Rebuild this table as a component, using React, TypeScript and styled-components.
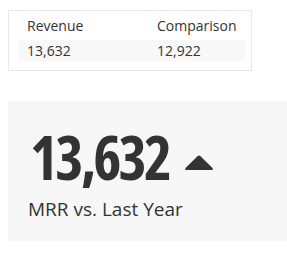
import React from "react";
import styled, { createGlobalStyle } from "styled-components";

const Global = createGlobalStyle`
  html, body { margin: 0; padding: 0; background: #ffffff; }
  body { padding: 8px 0 0 8px; font-family: "Open Sans", "Liberation Sans", sans-serif; color: #333333; }
  * { box-sizing: border-box; }
`;

const Page = styled.div`
  display: flex;
  flex-direction: column;
  gap: 30px;
  padding-top: 2px;
`;

const TableCard = styled.div`
  width: 244px;
  border: 1px solid #e8e8e8;
  padding: 0 9px 9px;
  display: grid;
  grid-template-columns: 130px 1fr;
`;

const HeadCell = styled.div`
  font-size: 14px;
  line-height: 21px;
  padding: 4px 9px;
  color: #333;
`;

const Cell = styled.div`
  font-size: 14px;
  line-height: 21px;
  padding: 0 9px;
  background: #f8f8f8;
  color: #333;
`;

const Panel = styled.div`
  height: 140px;
  margin-right: -8px;
  background: #f7f7f7;
  padding: 24px 20px 0;
  display: flex;
  flex-direction: column;
`;

const BigRow = styled.div`
  display: flex;
  align-items: flex-start;
  gap: 15px;
`;

const BigNumber = styled.div`
  margin-left: 2px;
  font-size: 60px;
  font-weight: 700;
  font-stretch: 75%;
  line-height: 64px;
  letter-spacing: -2.8px;
`;

const CaretBox = styled.div`
  margin-top: 29px;
  display: flex;
`;

const Caption = styled.div`
  margin-top: 7px;
  font-size: 19px;
  line-height: 26px;
`;

const Caret = () => (
  <CaretBox>
    <svg width="30" height="17" viewBox="0 0 30 17">
      <path d="M13.5 2.2 Q15 0.8 16.5 2.2 L28.5 14 Q29.5 16 27.5 16 L2.5 16 Q0.5 16 1.5 14 Z" fill="#333" />
    </svg>
  </CaretBox>
);

export default function App() {
  return (
    <>
      <Global />
      <Page>
        <TableCard>
          <HeadCell>Revenue</HeadCell>
          <HeadCell>Comparison</HeadCell>
          <Cell>13,632</Cell>
          <Cell>12,922</Cell>
        </TableCard>
        <Panel>
          <BigRow>
            <BigNumber>13,632</BigNumber>
            <Caret />
          </BigRow>
          <Caption>MRR vs. Last Year</Caption>
        </Panel>
      </Page>
    </>
  );
}
